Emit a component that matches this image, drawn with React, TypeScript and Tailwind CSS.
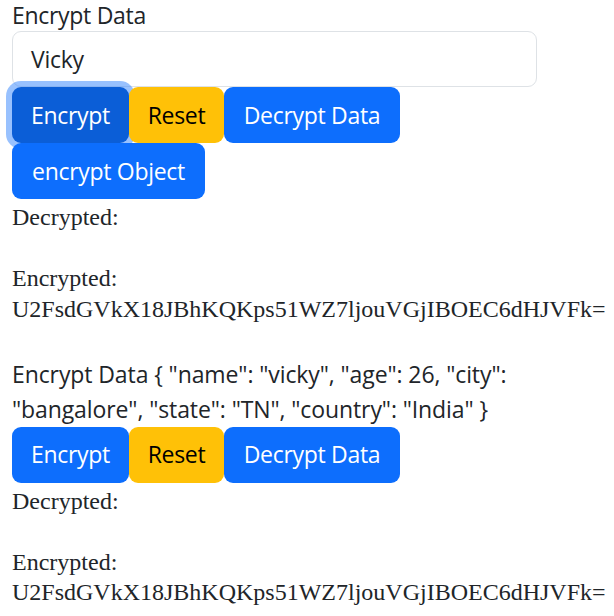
import React from "react";

const sans = "font-['Open_Sans',sans-serif]";

function Btn({
  label,
  w,
  kind,
}: {
  label: string;
  w: string;
  kind: "primary" | "warning" | "focus";
}) {
  const color =
    kind === "warning"
      ? "bg-[#ffc107] text-black"
      : kind === "focus"
      ? "bg-[#0b5ed7] text-white shadow-[0_0_0_6px_rgba(49,132,253,0.5)]"
      : "bg-[#0d6efd] text-white";
  return (
    <button
      className={`${w} ${color} h-[56px] rounded-[9px] flex items-center justify-center text-[23px] leading-[35px] whitespace-nowrap tracking-[-0.3px] ${sans}`}
    >
      {label}
    </button>
  );
}

function Result() {
  return (
    <div className="mt-[3px] font-['Liberation_Serif',serif] text-[24px] leading-[30.5px] text-[#212529]">
      <div>Decrypted: </div>
      <br />
      <div className="whitespace-nowrap">
        Encrypted:
        <br />
        U2FsdGVkX18JBhKQKps51WZ7ljouVGjIBOEC6dHJVFk=
      </div>
      <br />
    </div>
  );
}

export default function App() {
  return (
    <div className="bg-white min-h-[616px] w-[614px] overflow-hidden">
      <div className="ml-[12px] w-[525px] text-[#212529]">
        <div className={`h-[31px] text-[23px] leading-[31px] tracking-[-0.3px] ${sans}`}>
          Encrypt Data
        </div>
        <div
          className={`h-[56px] border-[1.5px] border-[#dee2e6] rounded-[9px] pl-[18px] flex items-center text-[23px] tracking-[-0.3px] ${sans}`}
        >
          Vicky
        </div>
        <div className="flex flex-wrap">
          <Btn label="Encrypt" w="w-[117px]" kind="focus" />
          <Btn label="Reset" w="w-[95px]" kind="warning" />
          <Btn label="Decrypt Data" w="w-[176px]" kind="primary" />
          <Btn label="encrypt Object" w="w-[193px]" kind="primary" />
        </div>
        <Result />
        <div className={`mt-[2px] text-[23px] leading-[35px] tracking-[-0.1px] ${sans}`}>
          Encrypt Data {'{'} "name": "vicky", "age": 26, "city": "bangalore",
          "state": "TN", "country": "India" {'}'}
        </div>
        <div className="flex flex-wrap">
          <Btn label="Encrypt" w="w-[117px]" kind="primary" />
          <Btn label="Reset" w="w-[95px]" kind="warning" />
          <Btn label="Decrypt Data" w="w-[176px]" kind="primary" />
        </div>
        <Result />
      </div>
    </div>
  );
}
